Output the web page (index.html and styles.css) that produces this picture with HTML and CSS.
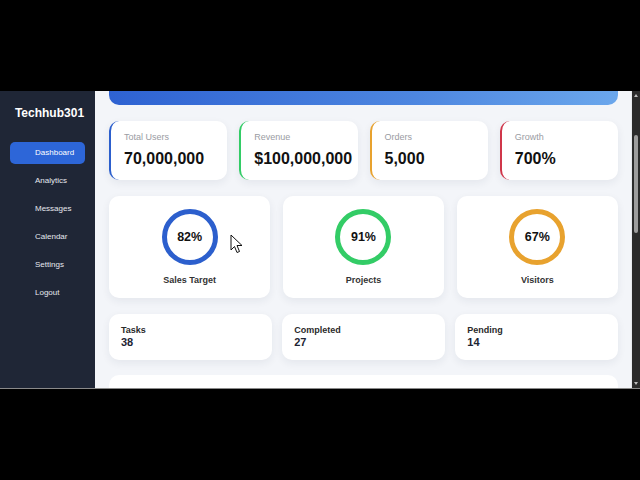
FILE: index.html
```html
<!DOCTYPE html>
<html>
<head>
<meta charset="utf-8">
<link rel="stylesheet" href="styles.css">
</head>
<body>
<div class="screen">
  <aside class="sidebar">
    <div class="brand">Techhub301</div>
    <nav class="nav">
      <a class="nav-item active">Dashboard</a>
      <a class="nav-item">Analytics</a>
      <a class="nav-item">Messages</a>
      <a class="nav-item">Calendar</a>
      <a class="nav-item">Settings</a>
      <a class="nav-item">Logout</a>
    </nav>
  </aside>
  <main class="main">
    <div class="content">
      <div class="banner"></div>
      <div class="stats">
        <div class="stat blue"><div class="stat-label">Total Users</div><div class="stat-value">70,000,000</div></div>
        <div class="stat green"><div class="stat-label">Revenue</div><div class="stat-value">$100,000,000</div></div>
        <div class="stat orange"><div class="stat-label">Orders</div><div class="stat-value">5,000</div></div>
        <div class="stat red"><div class="stat-label">Growth</div><div class="stat-value">700%</div></div>
      </div>
      <div class="rings">
        <div class="ring-card"><div class="ring ring-blue">82%</div><div class="ring-label">Sales Target</div></div>
        <div class="ring-card"><div class="ring ring-green">91%</div><div class="ring-label">Projects</div></div>
        <div class="ring-card"><div class="ring ring-orange">67%</div><div class="ring-label">Visitors</div></div>
      </div>
      <div class="smalls">
        <div class="small"><div class="small-label">Tasks</div><div class="small-value">38</div></div>
        <div class="small"><div class="small-label">Completed</div><div class="small-value">27</div></div>
        <div class="small"><div class="small-label">Pending</div><div class="small-value">14</div></div>
      </div>
      <div class="panel"></div>
    </div>
    <svg class="cursor" width="14" height="20" viewBox="0 0 14 20">
      <path d="M1 1 L1 16 L4.5 12.5 L7 18.5 L9.5 17.5 L7 11.5 L12 11.5 Z" fill="#fff" stroke="#111" stroke-width="1" stroke-linejoin="round"/>
    </svg>
  </main>
  <div class="scrollbar">
    <div class="arrow up"></div>
    <div class="track"><div class="thumb"></div></div>
    <div class="arrow down"></div>
  </div>
</div>
</body>
</html>
```

FILE: styles.css
```css
* { box-sizing: border-box; }
html, body { margin: 0; padding: 0; background: #000; }
body { font-family: "Liberation Sans", Arial, sans-serif; width: 640px; height: 480px; overflow: hidden; }

.screen {
  margin-top: 91px;
  height: 298px;
  display: flex;
  overflow: hidden;
  border-bottom: 1px solid #8a8a8a;
}

.sidebar {
  width: 95px;
  flex: none;
  background: #1f2636;
  padding: 15px 10px 0 10px;
}
.brand {
  color: #fff;
  font-weight: bold;
  font-size: 12px;
  line-height: 14px;
  text-align: center;
  padding-left: 4px;
}
.nav { margin-top: 22px; display: flex; flex-direction: column; gap: 6px; }
.nav-item {
  display: block;
  height: 22px;
  line-height: 22px;
  padding-left: 25px;
  font-size: 8px;
  color: #e6e8ee;
  border-radius: 5px;
}
.nav-item.active { background: #2d66d8; color: #fff; }

.main {
  flex: 1;
  background: #f3f5f9;
  position: relative;
  overflow: hidden;
  border-right: 1px solid #e8eaee;
}
.content {
  margin-top: -86px;
  padding: 0 13px 0 14px;
  display: flex;
  flex-direction: column;
  gap: 16px;
}
.banner {
  height: 100px;
  border-radius: 10px;
  background: linear-gradient(90deg, #2e62d2 0%, #4d86e0 60%, #6ba7ec 100%);
}

.stats { display: grid; grid-template-columns: repeat(4, minmax(0, 1fr)); gap: 12px; }
.stat {
  background: #fff;
  border-radius: 10px;
  border-left: 2px solid;
  height: 59px;
  padding: 10px 12px 0 13px;
  box-shadow: 0 3px 8px rgba(30, 40, 70, 0.07);
  white-space: nowrap;
}
.stat.blue { border-left-color: #2c5fcd; }
.stat.green { border-left-color: #33cc66; }
.stat.orange { border-left-color: #e8a22e; }
.stat.red { border-left-color: #d0364a; }
.stat-label { font-size: 9px; line-height: 12px; color: #9a9ca3; }
.stat-value { margin-top: 6px; font-size: 16px; line-height: 20px; font-weight: bold; color: #111; }

.rings { display: grid; grid-template-columns: repeat(3, minmax(0, 1fr)); gap: 12.5px; }
.ring-card {
  background: #fff;
  border-radius: 10px;
  height: 102px;
  padding-top: 13px;
  display: flex;
  flex-direction: column;
  align-items: center;
  box-shadow: 0 3px 8px rgba(30, 40, 70, 0.07);
}
.ring {
  width: 56px;
  height: 56px;
  border-radius: 50%;
  border: 5px solid;
  display: flex;
  align-items: center;
  justify-content: center;
  font-size: 12.5px;
  font-weight: bold;
  color: #111;
}
.ring-blue { border-color: #2c5fcd; }
.ring-green { border-color: #33cc66; }
.ring-orange { border-color: #e8a22e; }
.ring-label { margin-top: 10px; font-size: 9px; line-height: 10px; font-weight: bold; color: #333; }

.smalls { display: grid; grid-template-columns: repeat(3, minmax(0, 1fr)); gap: 10.5px; }
.small {
  background: #fff;
  border-radius: 10px;
  height: 46px;
  padding: 11px 12px 0 12px;
  box-shadow: 0 3px 8px rgba(30, 40, 70, 0.07);
}
.small-label { font-size: 9px; line-height: 11px; font-weight: bold; color: #2a2a2a; }
.small-value { font-size: 11px; line-height: 13px; font-weight: bold; color: #1d2433; }

.panel { height: 80px; background: #fff; border-radius: 10px; margin-top: -1px; }

.cursor { position: absolute; left: 135px; top: 143px; }

.scrollbar {
  width: 8px;
  flex: none;
  background: #2b2b2b;
  display: flex;
  flex-direction: column;
  align-items: center;
}
.arrow { width: 0; height: 0; border-left: 2.5px solid transparent; border-right: 2.5px solid transparent; margin: 3px 0; }
.arrow.up { border-bottom: 3px solid #bdbdbd; }
.arrow.down { border-top: 3px solid #bdbdbd; }
.track { flex: 1; width: 100%; padding-top: 35px; display: flex; justify-content: center; }
.thumb { width: 4px; height: 98px; background: #9d9d9d; border-radius: 2px; }
```
